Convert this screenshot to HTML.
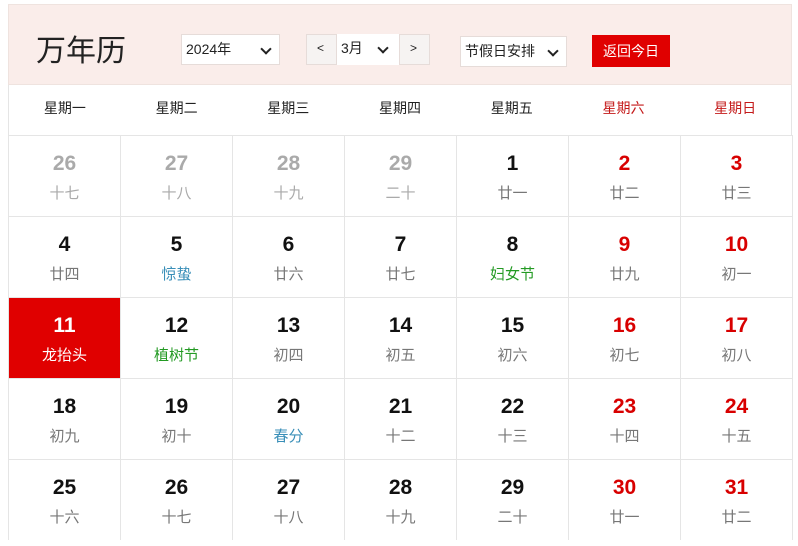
<!DOCTYPE html>
<html><head><meta charset="utf-8"><style>
*{margin:0;padding:0;box-sizing:border-box}
body{width:798px;height:546px;background:#fff;font-family:"Liberation Sans","Noto Sans CJK SC",sans-serif;position:relative;overflow:hidden}
.hd{position:absolute;left:8px;top:4px;width:784px;height:81px;background:#faedea;border:1px solid #efe3df}
.t{position:absolute;left:27px;top:21px;font-size:30px;color:#222}
.sel{position:absolute;background:#fff;border:1px solid #e6dcd9;font-size:14px;color:#222;height:31px;line-height:29px}
.chev{position:absolute;top:10px;width:8px;height:8px;border-right:2px solid #222;border-bottom:2px solid #222;transform:rotate(45deg)}
.btn{position:absolute;left:583px;top:30px;width:78px;height:32px;background:#e00000;color:#fff;font-size:14px;text-align:center;line-height:32px}
.wk{position:absolute;left:8px;top:85px;width:784px;height:51px;display:flex;border-left:1px solid #e5e5e5;border-right:1px solid #e5e5e5}
.wk div{flex:1;text-align:center;line-height:47px;font-size:14px;color:#222}
.grid{position:absolute;left:8px;top:135px;width:785px;display:grid;grid-template-columns:repeat(7,112px);border-left:1px solid #e5e5e5}
.c{height:81px;border-right:1px solid #e5e5e5;border-top:1px solid #e5e5e5;text-align:center}
.n{font-size:21px;font-weight:bold;color:#111;margin-top:16px;line-height:24px}
.l{font-size:15px;color:#777;margin-top:8px;line-height:20px}
.g .n,.g .l{color:#aaa}
.r .n{color:#d80000}
.gr{color:#239a23!important}.bl{color:#3a8fb8!important}
.today{background:#e00000}.today .n,.today .l{color:#fff}
</style></head><body>
<div class="hd">
<div class="t">万年历</div>
<div class="sel" style="left:172px;top:29px;width:99px;padding-left:4px">2024年<span class="chev" style="left:80px"></span></div>
<div class="sel" style="left:297px;top:29px;width:124px;background:#f6f3f2">
<span style="position:absolute;left:10px;top:-1px;font-size:12px">&lt;</span>
<div style="position:absolute;left:29px;top:-1px;width:64px;height:31px;background:#fff;border-left:1px solid #e6dcd9;border-right:1px solid #e6dcd9;padding-left:4px">3月<span class="chev" style="left:42px"></span></div>
<span style="position:absolute;left:103px;top:-1px;font-size:12px">&gt;</span></div>
<div class="sel" style="left:451px;top:31px;width:107px;padding-left:4px">节假日安排<span class="chev" style="left:88px"></span></div>
<div class="btn">返回今日</div>
</div>
<div class="wk"><div>星期一</div><div>星期二</div><div>星期三</div><div>星期四</div><div>星期五</div><div style="color:#c41a1a">星期六</div><div style="color:#c41a1a">星期日</div></div>
<div class="grid">
<div class="c g"><div class="n">26</div><div class="l">十七</div></div>
<div class="c g"><div class="n">27</div><div class="l">十八</div></div>
<div class="c g"><div class="n">28</div><div class="l">十九</div></div>
<div class="c g"><div class="n">29</div><div class="l">二十</div></div>
<div class="c"><div class="n">1</div><div class="l">廿一</div></div>
<div class="c r"><div class="n">2</div><div class="l">廿二</div></div>
<div class="c r"><div class="n">3</div><div class="l">廿三</div></div>
<div class="c"><div class="n">4</div><div class="l">廿四</div></div>
<div class="c"><div class="n">5</div><div class="l bl">惊蛰</div></div>
<div class="c"><div class="n">6</div><div class="l">廿六</div></div>
<div class="c"><div class="n">7</div><div class="l">廿七</div></div>
<div class="c"><div class="n">8</div><div class="l gr">妇女节</div></div>
<div class="c r"><div class="n">9</div><div class="l">廿九</div></div>
<div class="c r"><div class="n">10</div><div class="l">初一</div></div>
<div class="c today"><div class="n">11</div><div class="l">龙抬头</div></div>
<div class="c"><div class="n">12</div><div class="l gr">植树节</div></div>
<div class="c"><div class="n">13</div><div class="l">初四</div></div>
<div class="c"><div class="n">14</div><div class="l">初五</div></div>
<div class="c"><div class="n">15</div><div class="l">初六</div></div>
<div class="c r"><div class="n">16</div><div class="l">初七</div></div>
<div class="c r"><div class="n">17</div><div class="l">初八</div></div>
<div class="c"><div class="n">18</div><div class="l">初九</div></div>
<div class="c"><div class="n">19</div><div class="l">初十</div></div>
<div class="c"><div class="n">20</div><div class="l bl">春分</div></div>
<div class="c"><div class="n">21</div><div class="l">十二</div></div>
<div class="c"><div class="n">22</div><div class="l">十三</div></div>
<div class="c r"><div class="n">23</div><div class="l">十四</div></div>
<div class="c r"><div class="n">24</div><div class="l">十五</div></div>
<div class="c"><div class="n">25</div><div class="l">十六</div></div>
<div class="c"><div class="n">26</div><div class="l">十七</div></div>
<div class="c"><div class="n">27</div><div class="l">十八</div></div>
<div class="c"><div class="n">28</div><div class="l">十九</div></div>
<div class="c"><div class="n">29</div><div class="l">二十</div></div>
<div class="c r"><div class="n">30</div><div class="l">廿一</div></div>
<div class="c r"><div class="n">31</div><div class="l">廿二</div></div>
</div>
</body></html>
